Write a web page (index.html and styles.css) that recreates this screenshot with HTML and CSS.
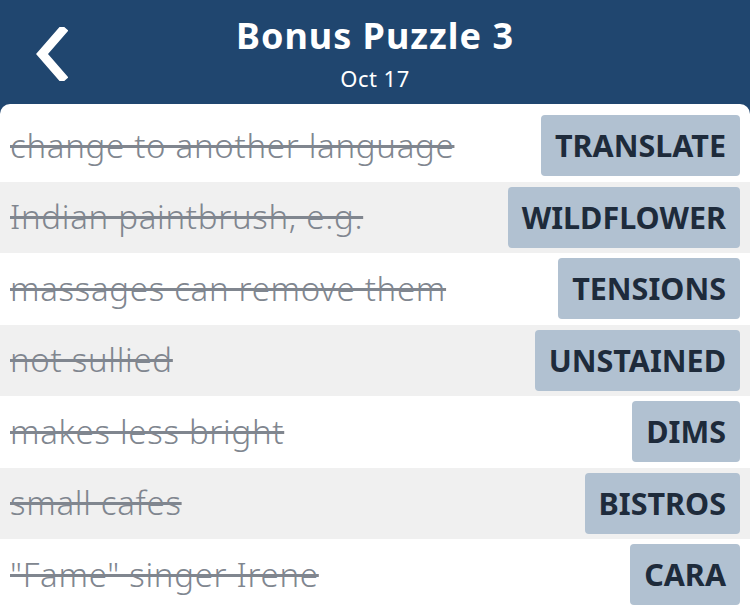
FILE: index.html
```html
<!DOCTYPE html>
<html lang="en">
<head>
    <meta charset="UTF-8">
    <meta name="viewport" content="width=device-width, initial-scale=1.0">
    <title>Bonus Puzzle 3</title>
    <link rel="stylesheet" href="styles.css">
</head>
<body>
    <div class="header">
        <a class="back" href="#">
            <svg width="34" height="54" viewBox="0 0 34 54">
                <path d="M28 4 L8 27 L28 50" fill="none" stroke="#fff" stroke-width="9" stroke-linecap="square"/>
            </svg>
        </a>
        <h1>Bonus Puzzle 3</h1>
        <div class="date">Oct 17</div>
    </div>
    <div class="card">
        <div class="row">
            <span class="clue">change to another language</span>
            <span class="answer">TRANSLATE</span>
        </div>
        <div class="row">
            <span class="clue">Indian paintbrush, e.g.</span>
            <span class="answer">WILDFLOWER</span>
        </div>
        <div class="row">
            <span class="clue">massages can remove them</span>
            <span class="answer">TENSIONS</span>
        </div>
        <div class="row">
            <span class="clue">not sullied</span>
            <span class="answer">UNSTAINED</span>
        </div>
        <div class="row">
            <span class="clue">makes less bright</span>
            <span class="answer">DIMS</span>
        </div>
        <div class="row">
            <span class="clue">small cafes</span>
            <span class="answer">BISTROS</span>
        </div>
        <div class="row">
            <span class="clue">"Fame" singer Irene</span>
            <span class="answer">CARA</span>
        </div>
    </div>
</body>
</html>
```

FILE: styles.css
```css
body {
    margin: 0;
    background-color: #20466f;
    font-family: "Noto Sans", sans-serif;
    overflow: hidden;
}
.header {
    position: relative;
    height: 104px;
    color: white;
    text-align: center;
}
.header h1 {
    margin: 0;
    padding-top: 13px;
    font-size: 36px;
    line-height: 46px;
    font-weight: bold;
    letter-spacing: 1px;
}
.date {
    margin-top: 3px;
    font-size: 22px;
    line-height: 32px;
    letter-spacing: 0.5px;
}
.back {
    position: absolute;
    left: 34px;
    top: 27px;
}
.card {
    background: white;
    border-radius: 10px 10px 0 0;
    padding-top: 6px;
}
.row {
    display: flex;
    align-items: center;
    justify-content: space-between;
    height: 71.5px;
    padding: 0 10px;
}
.row:nth-child(even) {
    background-color: #f0f0f0;
}
.clue {
    font-size: 33px;
    font-weight: 300;
    letter-spacing: 0.7px;
    line-height: 40px;
    color: #80868f;
    text-decoration: line-through;
}
.answer {
    background-color: #b1c1d1;
    color: #1e2b3b;
    font-size: 30.5px;
    font-weight: bold;
    line-height: 61px;
    padding: 0 14px;
    border-radius: 4px;
}
```
